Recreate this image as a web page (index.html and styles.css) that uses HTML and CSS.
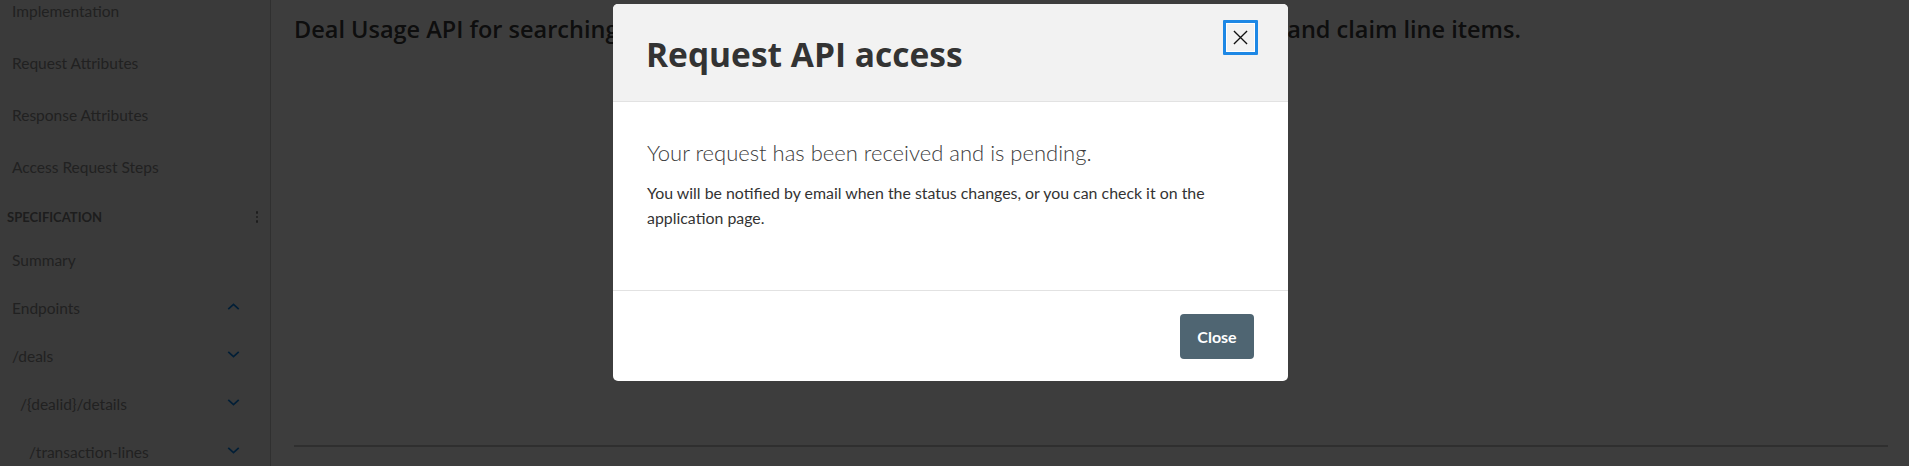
FILE: index.html
```html
<!DOCTYPE html>
<html lang="en">
<head>
<meta charset="utf-8">
<title>Deal Usage API</title>
<link rel="stylesheet" href="styles.css">
</head>
<body>
<div class="page">
  <aside class="sidebar">
    <nav class="nav">
      <a class="nav-item">Implementation</a>
      <a class="nav-item">Request Attributes</a>
      <a class="nav-item">Response Attributes</a>
      <a class="nav-item">Access Request Steps</a>
      <div class="nav-section">
        <span>SPECIFICATION</span>
        <span class="kebab"><i></i><i></i><i></i></span>
      </div>
      <a class="nav-sub">Summary</a>
      <a class="nav-sub">Endpoints
        <svg class="chev" viewBox="0 0 14 8"><path d="M1 7 L7 1.5 L13 7"/></svg>
      </a>
      <a class="nav-sub">/deals
        <svg class="chev" viewBox="0 0 14 8"><path d="M1 1 L7 6.5 L13 1"/></svg>
      </a>
      <a class="nav-sub lvl2">/{dealid}/details
        <svg class="chev" viewBox="0 0 14 8"><path d="M1 1 L7 6.5 L13 1"/></svg>
      </a>
      <a class="nav-sub lvl3">/transaction-lines
        <svg class="chev" viewBox="0 0 14 8"><path d="M1 1 L7 6.5 L13 1"/></svg>
      </a>
    </nav>
  </aside>
  <main class="main">
    <h2 class="lead">Deal Usage API for searching deals, retrieving deal details, usage data, transaction lines and claim line items.</h2>
    <div class="spacer"></div>
    <hr class="rule">
  </main>
</div>

<div class="backdrop">
  <div class="dialog" role="dialog">
    <div class="dialog-header">
      <h1 class="dialog-title">Request API access</h1>
      <button class="dialog-x" aria-label="Close">
        <svg viewBox="0 0 16 16"><path d="M1 1 L15 15 M15 1 L1 15"/></svg>
      </button>
    </div>
    <div class="dialog-body">
      <p class="status">Your request has been received and is pending.</p>
      <p class="note">You will be notified by email when the status changes, or you can check it on the application page.</p>
    </div>
    <div class="dialog-footer">
      <button class="btn-close">Close</button>
    </div>
  </div>
</div>
</body>
</html>
```

FILE: styles.css
```css
* { box-sizing: border-box; }
html, body { margin: 0; padding: 0; height: 100%; }
body {
  font-family: Lato, "Open Sans", "Liberation Sans", sans-serif;
  background: #fff;
  color: #333;
  overflow: hidden;
}
.page {
  display: flex;
  height: 466px;
  overflow: hidden;
}
.sidebar {
  width: 271px;
  flex: none;
  background: #f2f2f2;
  border-right: 1px solid #c8c8c8;
  overflow: hidden;
}
.nav {
  display: flex;
  flex-direction: column;
  margin-top: -15px;
}
.nav-item {
  display: block;
  height: 52px;
  line-height: 52px;
  padding-left: 12px;
  font-size: 15.5px;
  color: #8a8a8a;
}
.nav-section {
  display: flex;
  justify-content: space-between;
  align-items: center;
  height: 43px;
  padding: 16px 0 11px 7px;
  font-size: 13px;
  line-height: 16px;
  font-weight: 700;
  color: #7a7a7a;
}
.kebab {
  display: flex;
  flex-direction: column;
  gap: 2px;
  margin-right: 12px;
}
.kebab i {
  display: block;
  width: 2.5px;
  height: 2.5px;
  border-radius: 50%;
  background: #7a7a7a;
}
.nav-sub {
  display: flex;
  align-items: center;
  justify-content: space-between;
  height: 48px;
  line-height: 48px;
  padding: 0 30px 0 12px;
  font-size: 15.5px;
  color: #8a8a8a;
}
.nav-sub.lvl2 { padding-left: 20px; }
.nav-sub.lvl3 { padding-left: 29px; }
.chev {
  width: 13px;
  height: 7px;
  fill: none;
  stroke: #0a7fe0;
  stroke-width: 2;
  margin-top: -4px;
}
.main {
  flex: 1;
  display: flex;
  flex-direction: column;
  padding: 0 21px 0 23px;
}
.lead {
  margin: 0;
  padding-top: 14px;
  font-family: "Open Sans", Lato, sans-serif;
  font-size: 23.5px;
  line-height: 30px;
  font-weight: 600;
  color: #3a3a3a;
  white-space: nowrap;
}
.spacer { height: 401px; }
.rule {
  margin: 0;
  border: 0;
  height: 2px;
  background: #c4c4c4;
}

/* modal */
.backdrop {
  position: fixed;
  inset: 0;
  background: rgba(0, 0, 0, 0.76);
}
.dialog {
  margin: 4px 0 0 613px;
  width: 675px;
  background: #fff;
  border-radius: 5px;
  overflow: hidden;
}
.dialog-header {
  display: flex;
  justify-content: space-between;
  align-items: flex-start;
  height: 98px;
  padding: 16px 30px 0 33px;
  background: #f2f2f2;
  border-bottom: 1px solid #e2e2e2;
}
.dialog-title {
  margin: 0;
  padding-top: 14px;
  font-family: "Open Sans", Lato, sans-serif;
  font-size: 33.5px;
  line-height: 40px;
  font-weight: 700;
  color: #333;
}
.dialog-x {
  width: 35px;
  height: 35px;
  padding: 0;
  margin: 0;
  display: flex;
  align-items: center;
  justify-content: center;
  background: #f2f2f2;
  border: 3px solid #1e88e5;
  border-radius: 1px;
  box-shadow: inset 0 0 0 1px #fff;
}
.dialog-x svg {
  width: 15px;
  height: 15px;
  fill: none;
  stroke: #111;
  stroke-width: 1.4;
}
.dialog-body {
  height: 188px;
  padding: 37px 34px 0 34px;
}
.status {
  margin: 0;
  font-size: 22px;
  line-height: 28px;
  font-weight: 300;
  color: #3c3c3c;
}
.note {
  margin: 13px 0 0;
  font-size: 15.9px;
  line-height: 25px;
  color: #333;
}
.dialog-footer {
  display: flex;
  justify-content: flex-end;
  height: 91px;
  padding: 23px 34px 0;
  border-top: 1px solid #e2e2e2;
}
.btn-close {
  width: 74px;
  height: 45px;
  border: 0;
  border-radius: 4px;
  background: #4f6572;
  color: #fff;
  font-family: inherit;
  font-size: 16px;
  font-weight: 700;
}
```
